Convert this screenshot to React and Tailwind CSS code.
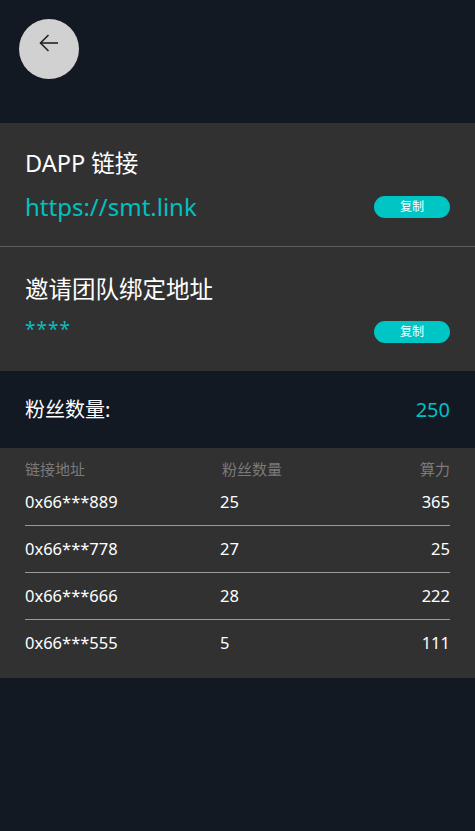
import { useState } from "react";

const rows = [
  { addr: "0x66***889", fans: 25, power: 365 },
  { addr: "0x66***778", fans: 27, power: 25 },
  { addr: "0x66***666", fans: 28, power: 222 },
  { addr: "0x66***555", fans: 5, power: 111 },
];

function CopyButton({ text, onCopy }) {
  return (
    <button
      onClick={() => onCopy?.(text)}
      className="w-[76px] h-[22px] rounded-full bg-[#00c5c5] text-white text-[12px] leading-none flex items-center justify-center"
    >
      复制
    </button>
  );
}

export default function App() {
  const [copied, setCopied] = useState("");

  const copy = (t) => {
    navigator.clipboard?.writeText(t).catch(() => {});
    setCopied(t);
  };

  return (
    <div
      className="min-h-[831px] bg-[#121923] text-white"
      style={{ fontFamily: '"Noto Sans", "Noto Sans CJK SC", sans-serif' }}
    >
      {/* header */}
      <div className="h-[123px] pt-[19px] pl-[19px]">
        <button className="w-[60px] h-[60px] rounded-full bg-[#d1d1d1] flex items-center justify-center">
          <svg width="20" height="18" viewBox="0 0 20 18" className="-mt-[12px]" fill="none" stroke="#1f2328" strokeWidth="1.6">
            <path d="M19 9H1.5" />
            <path d="M9.5 1L1.5 9l8 8" />
          </svg>
        </button>
      </div>

      {/* DAPP link */}
      <div className="bg-[#313131] px-[25px] pt-[25px] pb-[24px] border-b border-[#5d5d5d]">
        <div className="text-[23.5px] leading-[30px]">DAPP 链接</div>
        <div className="mt-[14px] h-[30px] flex items-center justify-between">
          <span className="text-[24px] leading-[30px] text-[#00c0c0]">https://smt.link</span>
          <CopyButton text="https://smt.link" onCopy={copy} />
        </div>
      </div>

      {/* invite address */}
      <div className="bg-[#313131] px-[25px] pt-[27px] pb-[24px]">
        <div className="text-[23.5px] leading-[30px]">邀请团队绑定地址</div>
        <div className="mt-[13px] h-[30px] flex items-center justify-between">
          <span className="text-[19px] leading-[30px] text-[#00c0c0] -mt-[6px] tracking-[1px]">****</span>
          <CopyButton text={copied ? copied : "****"} onCopy={copy} />
        </div>
      </div>

      {/* fans count */}
      <div className="h-[77px] px-[25px] flex items-center justify-between">
        <span className="text-[20px]">粉丝数量:</span>
        <span className="text-[20px] text-[#00c0c0]">250</span>
      </div>

      {/* fans table */}
      <div className="bg-[#313131] px-[25px] pt-[11px] pb-[11px]">
        <div className="flex h-[20px] items-center text-[15px] text-[#7a7a7a]">
          <span className="w-[197px]">链接地址</span>
          <span className="flex-1">粉丝数量</span>
          <span>算力</span>
        </div>
        <div className="divide-y divide-[#9a9a9a]">
          {rows.map((r) => (
            <div key={r.addr} className="flex h-[47px] items-center text-[16.5px]">
              <span className="w-[195px]">{r.addr}</span>
              <span className="flex-1">{r.fans}</span>
              <span>{r.power}</span>
            </div>
          ))}
        </div>
      </div>
    </div>
  );
}
